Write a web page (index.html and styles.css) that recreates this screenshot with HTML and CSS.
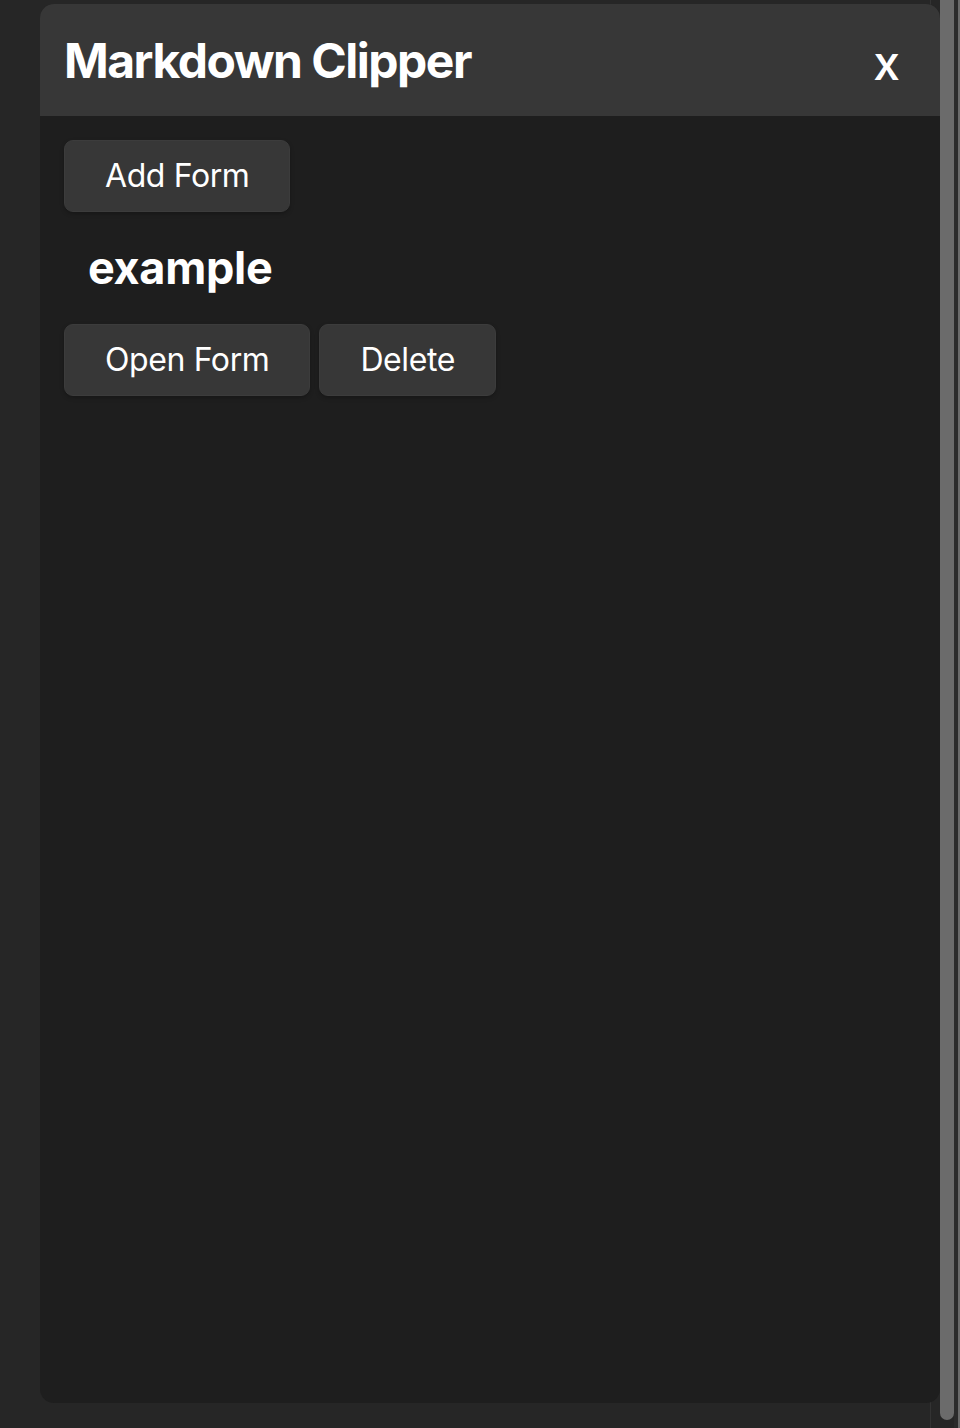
FILE: index.html
```html
<!DOCTYPE html>
<html>
<head>
    <title>Markdown Clipper</title>
    <link rel="stylesheet" href="styles.css">
</head>
<body>
    <!-- window scrollbar -->
    <div class="track-line"></div>
    <div class="thumb"></div>
    <div class="outer-gap"></div>
    <div class="outer-edge"></div>

    <div class="panel">
        <div class="panel-header">
            <h1>Markdown Clipper</h1>
            <span class="close">x</span>
        </div>
        <div class="panel-body">
            <button class="btn">Add Form</button>
            <div class="form-item">
                <h2>example</h2>
                <div class="actions">
                    <button class="btn">Open Form</button>
                    <button class="btn">Delete</button>
                </div>
            </div>
        </div>
    </div>
</body>
</html>
```

FILE: styles.css
```css
html, body { margin: 0; height: 100%; }
body { background: #262626; font-family: Inter, "Noto Sans", sans-serif; color: #fff; overflow: hidden; position: relative; }

.panel { position: relative; width: 900px; height: 1399px; margin: 4px 0 0 40px; background: #1e1e1e; border-radius: 14px; overflow: hidden; }
.panel-header { height: 112px; background: #373737; display: flex; align-items: center; justify-content: space-between; padding: 0 40px 0 24px; box-sizing: border-box; }
.panel-header h1 { margin: 0; font-size: 48px; font-weight: 700; letter-spacing: -1.5px; }
.close { font-size: 48px; font-weight: 500; line-height: 1; margin-top: 6px; }

.panel-body { padding: 24px; }
.btn { font-family: inherit; font-size: 32px; line-height: 38px; letter-spacing: -0.4px; color: #fff; background: #373737; border: 1px solid #3c3c3c; border-radius: 9px; padding: 16px 40px; box-shadow: 0 2px 4px rgba(0,0,0,0.25); cursor: pointer; }

.form-item h2 { margin: 32px 0; padding-left: 24px; font-size: 45px; line-height: 48px; font-weight: 700; letter-spacing: -0.3px; }
.actions { display: flex; gap: 9px; }

.track-line { position: absolute; left: 930px; top: 0; bottom: 0; width: 1px; background: #333; }
.thumb { position: absolute; left: 940px; top: 0; width: 14px; height: 1420px; background: #6b6b6b; border-radius: 0 0 7px 7px; }
.outer-gap { position: absolute; left: 954px; top: 0; bottom: 0; width: 4px; background: #2b2b2b; }
.outer-edge { position: absolute; left: 958px; top: 0; bottom: 0; width: 2px; background: #6b6b6b; }
```
